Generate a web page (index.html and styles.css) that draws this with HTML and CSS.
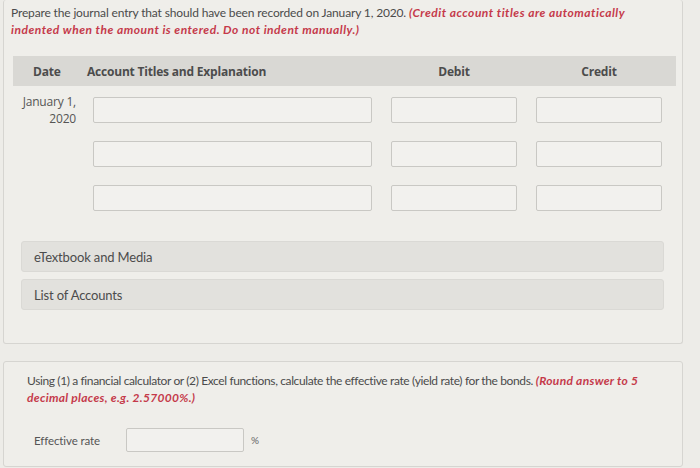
FILE: index.html
```html
<!DOCTYPE html>
<html>
<head>
<meta charset="utf-8">
<link rel="stylesheet" href="styles.css">
</head>
<body>
<div class="card card-journal">
  <p class="instr">Prepare the journal entry that should have been recorded on January 1, 2020. <em class="hint">(Credit account titles are automatically indented when the amount is entered. Do not indent manually.)</em></p>

  <div class="grid head">
    <div class="h-date">Date</div>
    <div class="h-acct">Account Titles and Explanation</div>
    <div class="h-num">Debit</div>
    <div class="h-num">Credit</div>
  </div>

  <div class="rows">
    <div class="grid row">
      <div class="date">January 1,<br>2020</div>
      <div class="box"></div>
      <div class="box"></div>
      <div class="box"></div>
    </div>
    <div class="grid row">
      <div class="date"></div>
      <div class="box"></div>
      <div class="box"></div>
      <div class="box"></div>
    </div>
    <div class="grid row">
      <div class="date"></div>
      <div class="box"></div>
      <div class="box"></div>
      <div class="box"></div>
    </div>
  </div>

  <div class="links">
    <div class="link">eTextbook and Media</div>
    <div class="link">List of Accounts</div>
  </div>
</div>

<div class="card card-rate">
  <p class="instr q">Using (1) a financial calculator or (2) Excel functions, calculate the effective rate (yield rate) for the bonds. <em class="hint">(Round answer to 5 decimal places, e.g. 2.57000%.)</em></p>
  <div class="rate-row">
    <span class="rate-label">Effective rate</span>
    <div class="box rate-box"></div>
    <span class="pct">%</span>
  </div>
</div>
</body>
</html>
```

FILE: styles.css
```css
html, body {
  margin: 0;
  padding: 0;
  background: #edece8;
  width: 700px;
  height: 468px;
  overflow: hidden;
  font-family: Lato, "Open Sans", sans-serif;
  color: #4a4a4a;
}

.card {
  width: 680px;
  margin-left: 3px;
  border: 1px solid #d6d5d1;
  border-radius: 3px;
  background: #efeeea;
  box-sizing: border-box;
}

.card-journal {
  border-top: none;
  padding: 4px 0 33px 0;
}

.instr {
  margin: 0 0 0 7px;
  font-size: 12px;
  line-height: 17px;
  letter-spacing: -0.15px;
  color: #4b4b4b;
  width: 630px;
}

.hint {
  color: #c53a4a;
  font-weight: 700;
  font-style: italic;
  letter-spacing: 0.5px;
}

.grid {
  display: grid;
  grid-template-columns: 61px 279px 126px 126px;
  column-gap: 19px;
  margin-left: 9px;
  width: 663px;
  box-sizing: border-box;
}

.head {
  margin-top: 18px;
  height: 30px;
  background: #d9d8d4;
  align-items: center;
  font-family: "Open Sans", sans-serif;
  font-weight: 700;
  font-size: 12px;
  color: #4c4c4c;
  letter-spacing: -0.2px;
}

.h-date { padding-left: 20px; }
.h-acct { margin-left: -6px; }
.h-num { text-align: center; }

.rows {
  margin-top: 11px;
  display: flex;
  flex-direction: column;
  gap: 18px;
}

.row { height: 26px; }

.date {
  font-family: "Open Sans", sans-serif;
  font-size: 12px;
  line-height: 17px;
  color: #555;
  text-align: right;
  margin-left: -20px;
  margin-right: -2px;
  margin-top: -4px;
  letter-spacing: -0.2px;
}

.box {
  height: 26px;
  box-sizing: border-box;
  border: 1px solid #c9c8c4;
  border-radius: 2px;
  background: #f2f1ee;
}

.links {
  margin: 30px 0 0 17px;
  width: 643px;
  display: flex;
  flex-direction: column;
  gap: 7px;
}

.link {
  height: 31px;
  box-sizing: border-box;
  padding-left: 12px;
  display: flex;
  align-items: center;
  background: #e2e1dd;
  border: 1px solid #dad9d5;
  border-radius: 3px;
  font-size: 13px;
  color: #4c4c4c;
  letter-spacing: -0.15px;
}

.card-rate {
  margin-top: 17px;
  height: 106px;
  padding-top: 10px;
}

.q {
  margin-left: 23px;
  width: 622px;
  letter-spacing: -0.38px;
}

.q .hint {
  letter-spacing: 0.3px;
}

.rate-row {
  margin: 22px 0 0 30px;
  display: flex;
  align-items: center;
}

.rate-label {
  width: 92px;
  font-size: 11.5px;
  color: #555;
  letter-spacing: -0.1px;
}

.rate-box {
  width: 118px;
  height: 24px;
}

.pct {
  margin-left: 7px;
  font-size: 10px;
  color: #666;
}
```
